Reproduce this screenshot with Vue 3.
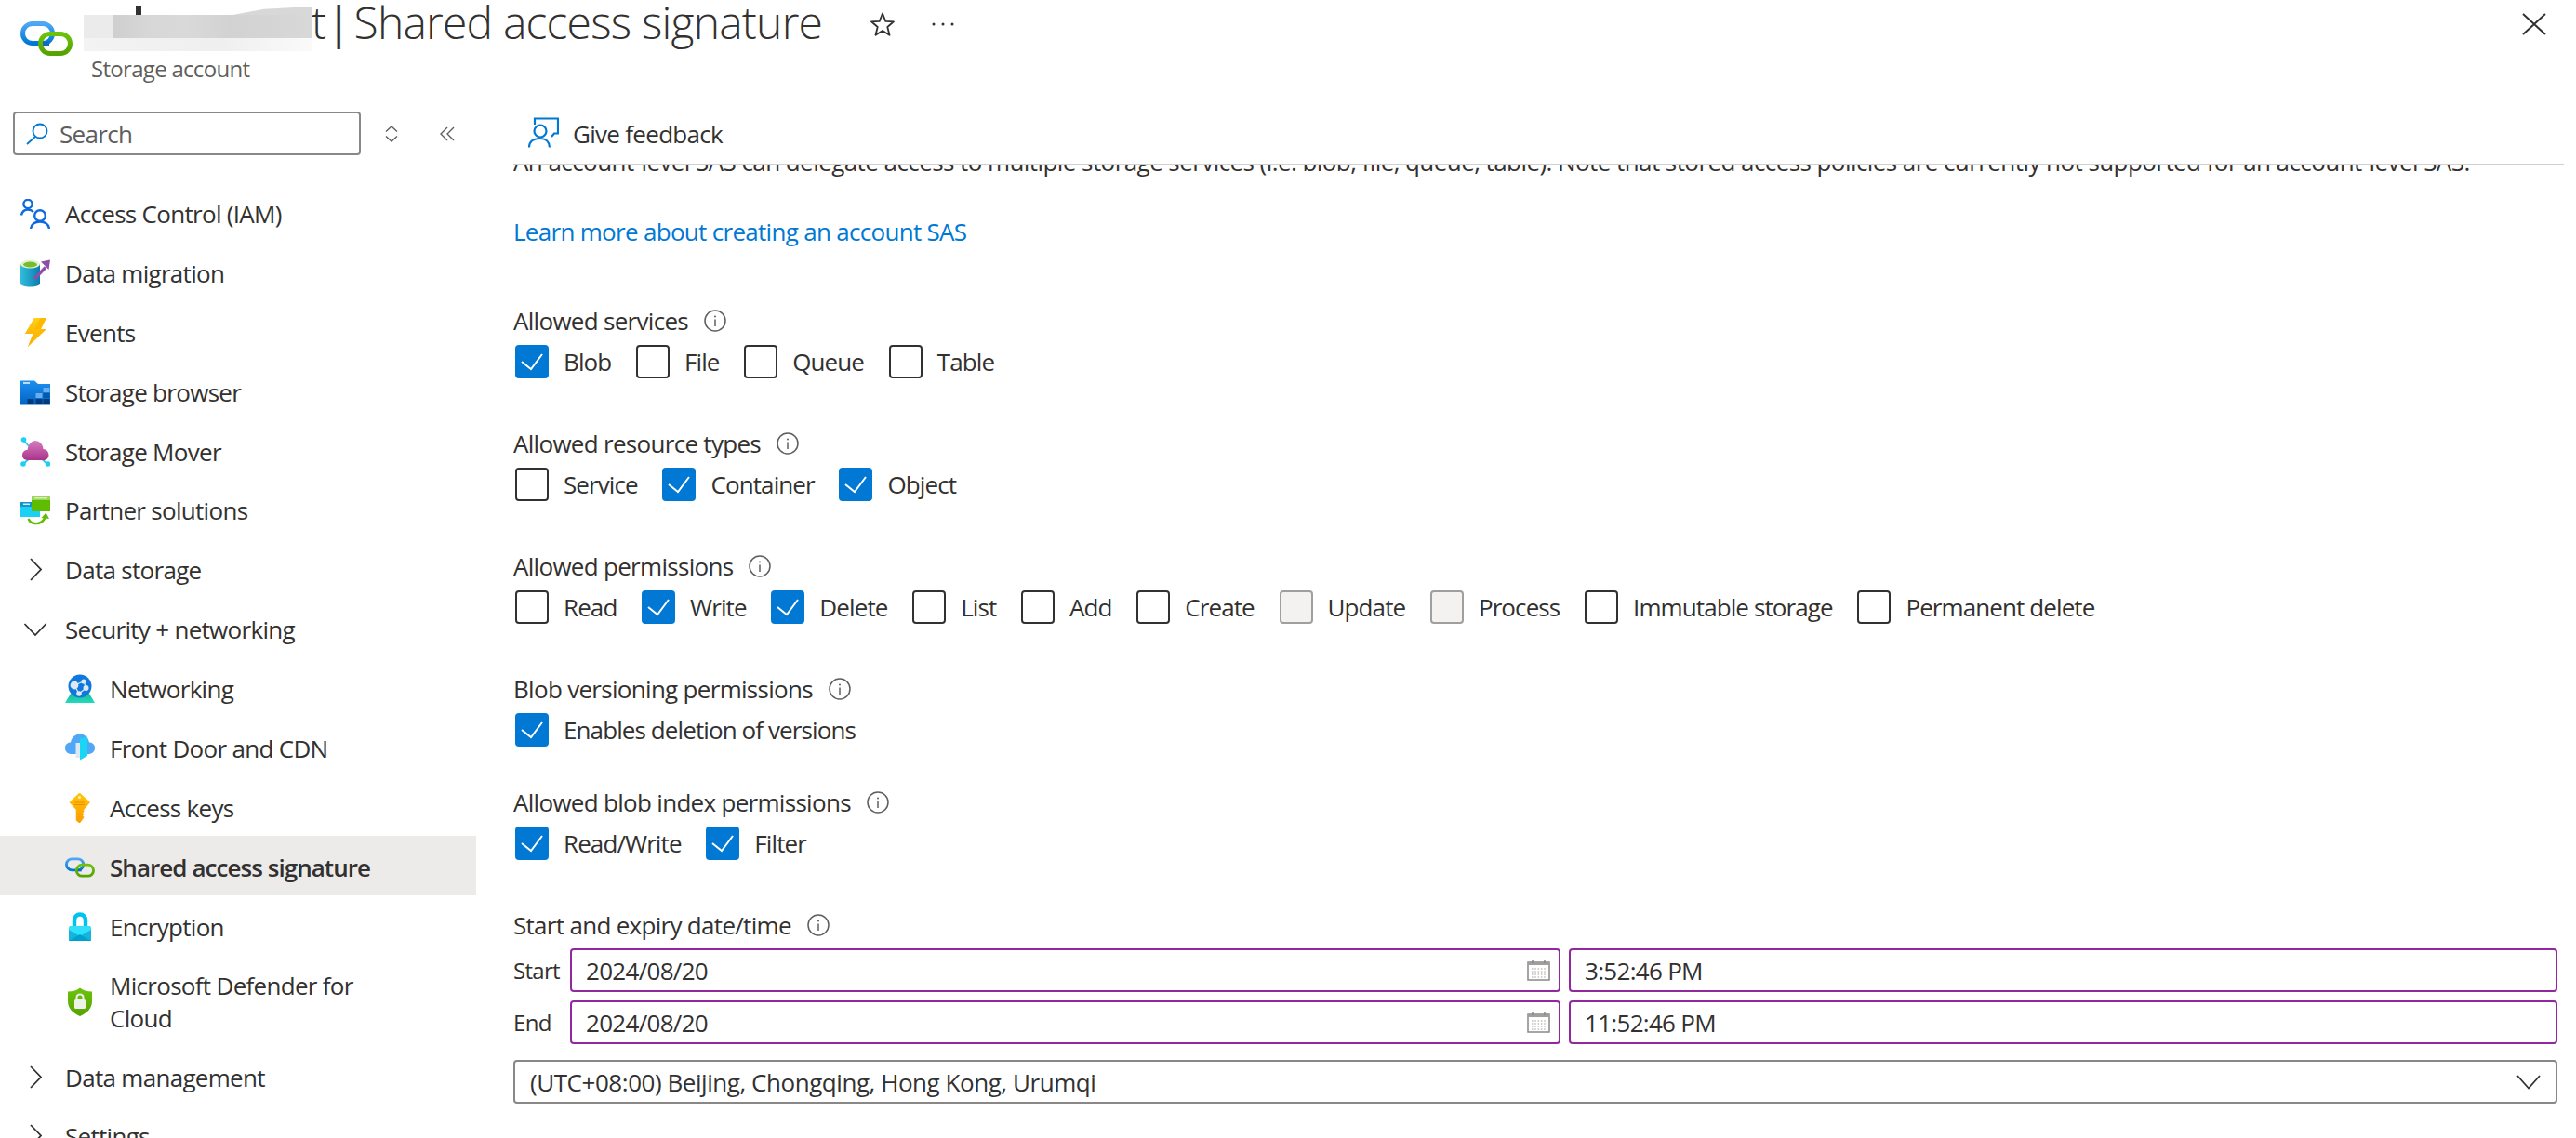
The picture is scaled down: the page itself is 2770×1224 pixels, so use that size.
<script setup>
const navItems = [
  { label: 'Access Control (IAM)', icon: 'iam' },
  { label: 'Data migration', icon: 'migration' },
  { label: 'Events', icon: 'events' },
  { label: 'Storage browser', icon: 'browser' },
  { label: 'Storage Mover', icon: 'mover' },
  { label: 'Partner solutions', icon: 'partner' },
  { label: 'Data storage', icon: 'chev-right' },
  { label: 'Security + networking', icon: 'chev-down' },
  { label: 'Networking', icon: 'networking', child: true },
  { label: 'Front Door and CDN', icon: 'frontdoor', child: true },
  { label: 'Access keys', icon: 'key', child: true },
  { label: 'Shared access signature', icon: 'sas', child: true, active: true },
  { label: 'Encryption', icon: 'encryption', child: true },
  { label: 'Microsoft Defender for Cloud', icon: 'defender', child: true, tall: true },
  { label: 'Data management', icon: 'chev-right' },
  { label: 'Settings', icon: 'chev-right' }
]

const fields = [
  {
    label: 'Allowed services',
    options: [
      { text: 'Blob', on: true },
      { text: 'File' },
      { text: 'Queue' },
      { text: 'Table' }
    ]
  },
  {
    label: 'Allowed resource types',
    options: [
      { text: 'Service' },
      { text: 'Container', on: true },
      { text: 'Object', on: true }
    ]
  },
  {
    label: 'Allowed permissions',
    options: [
      { text: 'Read' },
      { text: 'Write', on: true },
      { text: 'Delete', on: true },
      { text: 'List' },
      { text: 'Add' },
      { text: 'Create' },
      { text: 'Update', disabled: true },
      { text: 'Process', disabled: true },
      { text: 'Immutable storage' },
      { text: 'Permanent delete' }
    ]
  },
  {
    label: 'Blob versioning permissions',
    tight: true,
    options: [{ text: 'Enables deletion of versions', on: true }]
  },
  {
    label: 'Allowed blob index permissions',
    options: [
      { text: 'Read/Write', on: true },
      { text: 'Filter', on: true }
    ]
  }
]

const dateRows = [
  { label: 'Start', date: '2024/08/20', time: '3:52:46 PM' },
  { label: 'End', date: '2024/08/20', time: '11:52:46 PM' }
]
</script>

<template>
  <div class="page">
    <!-- shared icon sprites -->
    <svg class="sprites" width="0" height="0">
      <defs>
        <linearGradient id="g-blue" x1="0" y1="0" x2="0" y2="1"><stop offset="0" stop-color="#50a7f5" /><stop offset="1" stop-color="#0078d4" /></linearGradient>
        <linearGradient id="g-green" x1="0" y1="0" x2="0" y2="1"><stop offset="0" stop-color="#6cc30a" /><stop offset="1" stop-color="#55a300" /></linearGradient>
        <linearGradient id="g-can" x1="0" y1="0" x2="1" y2="0"><stop offset="0" stop-color="#32bedd" /><stop offset="1" stop-color="#0a7cb0" /></linearGradient>
        <linearGradient id="g-folder" x1="0" y1="0" x2="0" y2="1"><stop offset="0" stop-color="#1e90ee" /><stop offset="1" stop-color="#0063c4" /></linearGradient>
        <linearGradient id="g-cloud" x1="0" y1="0" x2="0" y2="1"><stop offset="0" stop-color="#d77cc0" /><stop offset="1" stop-color="#a8338a" /></linearGradient>
        <linearGradient id="g-bolt" x1="0" y1="0" x2="0" y2="1"><stop offset="0" stop-color="#fcd116" /><stop offset="1" stop-color="#ffa400" /></linearGradient>
        <linearGradient id="g-key" x1="0" y1="0" x2="0" y2="1"><stop offset="0" stop-color="#ffc60a" /><stop offset="1" stop-color="#ff9c00" /></linearGradient>
        <linearGradient id="g-base" x1="0" y1="0" x2="0" y2="1"><stop offset="0" stop-color="#1fb890" /><stop offset="1" stop-color="#20dcc0" /></linearGradient>
      </defs>

      <symbol id="ic-sas" viewBox="0 0 56 37">
        <rect x="2.5" y="2.5" width="32" height="21" rx="10.5" fill="none" stroke="url(#g-blue)" stroke-width="5" />
        <rect x="21.5" y="13.5" width="32" height="21" rx="10.5" fill="none" stroke="url(#g-green)" stroke-width="5" />
        <path d="M31 23.8 H24" stroke="#0f6cbd" stroke-width="4.6" fill="none" />
      </symbol>

      <symbol id="ic-iam" viewBox="0 0 32 32">
        <g fill="none" stroke="#0f6ae0" stroke-width="2.4">
          <circle cx="8" cy="5.500" r="4.600" />
          <circle cx="21" cy="18" r="5.800" />
          <path d="M1 17.500 C2 13.500 5 11.500 8 11.500 C10.500 11.500 12.500 12.500 14 14" />
          <path d="M11 32 C12 27 16 24.500 21 24.500 C26 24.500 30 27 31 32" />
        </g>
      </symbol>

      <symbol id="ic-migration" viewBox="0 0 32 32">
        <path d="M0 6 H21 V27 C21 29 16 30.500 10.500 30.500 C5 30.500 0 29 0 27 Z" fill="url(#g-can)" />
        <ellipse cx="10.500" cy="6" rx="10.500" ry="4.500" fill="#e4f3d0" />
        <ellipse cx="10.500" cy="6.500" rx="7.500" ry="3" fill="#76bc2d" />
        <path d="M15 22 L27 9.500" stroke="#8c4fa5" stroke-width="3.400" />
        <path d="M22 3.500 L32 1.500 L30.500 12 Z" fill="#8c4fa5" />
      </symbol>

      <symbol id="ic-events" viewBox="0 0 32 32">
        <path d="M15 0 H28 L22 12 H28 L8 31 L14 17 H5 Z" fill="#ffb900" />
        <path d="M15 0 H21.500 L15 12 H22 L8 31 L13.500 17 H5 Z" fill="url(#g-bolt)" />
      </symbol>

      <symbol id="ic-browser" viewBox="0 0 32 32">
        <path d="M0 3.500 H15 L19 7 H32 V29.500 H0 Z" fill="url(#g-folder)" />
        <rect x="3" y="5" width="7" height="2" fill="#b9dcfb" />
        <rect x="24.500" y="11" width="7" height="5" fill="#66aef0" />
        <rect x="16.500" y="17" width="7" height="5" fill="#66aef0" />
        <rect x="24.500" y="17" width="7" height="5" fill="#0058a8" />
        <rect x="7.500" y="23" width="7" height="5" fill="#003a7a" />
        <rect x="16.500" y="23" width="7" height="5" fill="#003a7a" />
        <rect x="24.500" y="23" width="7" height="5" fill="#003a7a" />
      </symbol>

      <symbol id="ic-mover" viewBox="0 0 32 32">
        <g stroke="#32c4ee" stroke-width="1.800">
          <path d="M3 3 L10 11" />
          <path d="M3 29 L10 23" />
          <path d="M29 29 L22 23" />
        </g>
        <circle cx="3.500" cy="3" r="2.800" fill="#1ad0f5" />
        <circle cx="3" cy="29" r="2.800" fill="#1ad0f5" />
        <circle cx="29.500" cy="29" r="2.800" fill="#1ad0f5" />
        <path d="M8 25 C3.500 25 2 22 2 19.500 C2 16 4.500 14 7.500 14 C8.500 7.500 12 4 16 4 C20.500 4 24 7.500 24.500 13 C28 13 30.500 16 30.500 19.500 C30.500 22.500 28 25 25 25 Z" fill="url(#g-cloud)" />
      </symbol>

      <symbol id="ic-partner" viewBox="0 0 32 32">
        <rect x="0" y="7" width="21" height="16" fill="#1ad0f5" />
        <rect x="0" y="7" width="21" height="5" fill="#1494c8" />
        <rect x="3" y="8.500" width="7" height="1.500" fill="#c8eefc" />
        <rect x="12" y="0" width="20" height="17" fill="#5ebd00" />
        <rect x="12" y="0" width="20" height="5" fill="#9cd45c" />
        <rect x="15" y="2" width="14" height="1.500" fill="#d4eeb8" />
        <path d="M8.500 25 C11 31 21 33 26.500 24" fill="none" stroke="#5ebd00" stroke-width="2.400" />
        <path d="M22.500 24 L27.500 18.500 L31 25 Z" fill="#5ebd00" />
      </symbol>

      <symbol id="ic-networking" viewBox="0 0 32 32">
        <path d="M6 21 H26 L32 31 H0 Z" fill="url(#g-base)" />
        <circle cx="16" cy="13" r="12.500" fill="#0f78dc" />
        <g fill="#dfe9f5">
          <circle cx="10" cy="12" r="4.400" />
          <circle cx="20" cy="8" r="2.600" />
          <circle cx="22.500" cy="15" r="3" />
          <circle cx="15" cy="21" r="2.800" />
        </g>
        <path d="M10 12 L20 8 L22.500 15 L15 21 Z" fill="none" stroke="#dfe9f5" stroke-width="1.200" />
      </symbol>

      <symbol id="ic-frontdoor" viewBox="0 0 32 32">
        <path d="M7 22 C3 22 0 19.500 0 15.500 C0 12 2.500 9.500 6 9.500 C7 4 11 0.500 16 0.500 C21 0.500 25 4 26 9.500 C29.500 9.500 32 12 32 15.500 C32 19.500 29 22 25 22 Z" fill="#50a7f5" />
        <rect x="11.500" y="10" width="4.500" height="16" fill="#dbe9f7" />
        <path d="M16 5.500 L24 3.500 V24 L16 28.500 Z" fill="#1ad6f5" />
      </symbol>

      <symbol id="ic-key" viewBox="0 0 32 32">
        <path d="M15.500 0.500 L26 10 L19.500 17.500 V20 L18 21.500 L19.500 23 L18 24.500 L19.500 26 L15.500 31.500 L12.500 29 V17.500 L5.500 10 Z" fill="url(#g-key)" stroke="url(#g-key)" stroke-linejoin="round" stroke-width="1.500" />
        <circle cx="15.500" cy="4.500" r="1.500" fill="#fff3c4" />
        <path d="M10 10 H21 M10 12.500 H21" stroke="#f08a00" stroke-width="1" />
      </symbol>

      <symbol id="ic-encryption" viewBox="0 0 32 32">
        <path d="M10 15 V9 C10 5 12.500 2.500 16 2.500 C19.500 2.500 22 5 22 9 V15" fill="none" stroke="#00c4f0" stroke-width="4.400" />
        <rect x="4" y="15" width="24" height="16" rx="1.500" fill="#32e0fa" />
        <path d="M4 31 V19 L16 26 L28 19 V31 Z" fill="#14b4dc" />
        <path d="M4 31 L16 24 L28 31 Z" fill="#00a0d0" />
      </symbol>

      <symbol id="ic-defender" viewBox="0 0 32 32">
        <path d="M16 0.500 C20 3.500 24 4.500 29 4.500 V15 C29 23 23 28 16 31 C9 28 3 23 3 15 V4.500 C8 4.500 12 3.500 16 0.500 Z" fill="url(#g-green)" />
        <rect x="10" y="13" width="12" height="10" rx="1.500" fill="#eef3ea" />
        <path d="M12.500 13 V11 C12.500 8.800 14 7.500 16 7.500 C18 7.500 19.500 8.800 19.500 11 V13" fill="none" stroke="#eef3ea" stroke-width="2" />
      </symbol>

      <symbol id="ic-chev-right" viewBox="0 0 32 32">
        <path d="M11 4 L22 15.500 L11 27" fill="none" stroke="#323130" stroke-width="1.800" />
      </symbol>
      <symbol id="ic-chev-down" viewBox="0 0 32 32">
        <path d="M4.500 10 L16 22 L27.500 10" fill="none" stroke="#323130" stroke-width="1.800" />
      </symbol>

      <symbol id="ic-info" viewBox="0 0 24 24">
        <circle cx="12" cy="12" r="11" fill="none" stroke="#605e5c" stroke-width="1.500" />
        <path d="M12 10.500 V18" stroke="#605e5c" stroke-width="1.500" />
        <circle cx="12" cy="7.500" r="1" fill="#605e5c" />
      </symbol>

      <symbol id="ic-calendar" viewBox="0 0 25 22">
        <rect x="1" y="2" width="23" height="19" fill="#fff" stroke="#8a8886" stroke-width="1.500" />
        <rect x="1" y="2" width="23" height="3" fill="#a19f9d" />
        <path d="M6 0 V3 M19 0 V3" stroke="#8a8886" stroke-width="1.500" />
        <path d="M5 9 H20 M5 12 H20 M5 15 H20 M5 18 H20" stroke="#a19f9d" stroke-width="1.200" stroke-dasharray="1.500 1.800" />
      </symbol>
    </svg>

    <header class="header">
      <svg class="logo"><use href="#ic-sas" /></svg>
      <div class="heading">
        <div class="title-row">
          <h1 class="title">
            <span class="name-mask"><i class="mask-tick"></i><i class="mask-step"></i></span><span class="name-tail">t <span class="sep">|</span> </span>Shared access signature
          </h1>
          <svg class="star" viewBox="0 0 26 26">
            <path d="M13 1.500 L16.300 9.800 L25 10.300 L18.300 16 L20.500 24.800 L13 20 L5.500 24.800 L7.700 16 L1 10.300 L9.700 9.800 Z" fill="none" stroke="#323130" stroke-width="1.800" stroke-linejoin="round" />
          </svg>
          <svg class="more" viewBox="0 0 24 4">
            <circle cx="2" cy="2" r="1.500" fill="#323130" />
            <circle cx="12" cy="2" r="1.500" fill="#323130" />
            <circle cx="22" cy="2" r="1.500" fill="#323130" />
          </svg>
        </div>
        <div class="subtitle">Storage account</div>
      </div>
      <svg class="close" viewBox="0 0 26 24">
        <path d="M1 1 L25 23 M25 1 L1 23" stroke="#323130" stroke-width="2" />
      </svg>
    </header>

    <div class="body">
      <aside class="sidebar">
        <div class="search-row">
          <div class="search">
            <svg class="search-icon" viewBox="0 0 24 24">
              <circle cx="15" cy="9" r="7.500" fill="none" stroke="#0078d4" stroke-width="1.800" />
              <path d="M10 15 L1 23" stroke="#0078d4" stroke-width="1.800" />
            </svg>
            <span>Search</span>
          </div>
          <svg class="sort-icon" viewBox="0 0 14 18">
            <path d="M1 6.500 L7 1 L13 6.500 M1 11.500 L7 17 L13 11.500" fill="none" stroke="#605e5c" stroke-width="1.400" />
          </svg>
          <svg class="collapse-icon" viewBox="0 0 16 16">
            <path d="M8 1 L1 8 L8 15 M15 1 L8 8 L15 15" fill="none" stroke="#605e5c" stroke-width="1.400" />
          </svg>
        </div>

        <nav class="nav">
          <div
            v-for="item in navItems"
            :key="item.label"
            class="nav-row"
            :class="{ child: item.child, active: item.active, tall: item.tall }"
          >
            <svg class="nav-icon"><use :href="`#ic-${item.icon}`" /></svg>
            <span class="nav-label">{{ item.label }}</span>
          </div>
        </nav>
      </aside>

      <main class="main">
        <div class="toolbar">
          <svg class="feedback-icon" viewBox="0 0 34 33">
            <g fill="none" stroke="#0078d4" stroke-width="2.200">
              <path d="M8 8 V1.500 H33 V17.500 H29 L26 21" />
              <circle cx="14" cy="15" r="6.500" />
              <path d="M2 32.500 C2 26 7 23 14 23 C20 23 23.500 26 24 32.500" />
            </g>
          </svg>
          <span>Give feedback</span>
        </div>

        <div class="content">
          <p class="intro">An account-level SAS can delegate access to multiple storage services (i.e. blob, file, queue, table). Note that stored access policies are currently not supported for an account-level SAS.</p>
          <a class="learn" href="#">Learn more about creating an account SAS</a>

          <section v-for="field in fields" :key="field.label" class="field" :class="{ tight: field.tight }">
            <div class="field-label">
              <span>{{ field.label }}</span>
              <svg class="info"><use href="#ic-info" /></svg>
            </div>
            <div class="checks">
              <label v-for="opt in field.options" :key="opt.text" class="check">
                <span class="box" :class="{ on: opt.on, disabled: opt.disabled }">
                  <svg v-if="opt.on" viewBox="0 0 36 36">
                    <path d="M7 18 L17 26 L29 10" fill="none" stroke="#fff" stroke-width="2" />
                  </svg>
                </span>
                <span>{{ opt.text }}</span>
              </label>
            </div>
          </section>

          <section class="dates">
            <div class="field-label">
              <span>Start and expiry date/time</span>
              <svg class="info"><use href="#ic-info" /></svg>
            </div>
            <div class="date-grid">
              <template v-for="row in dateRows" :key="row.label">
                <span class="date-label">{{ row.label }}</span>
                <div class="input">
                  <span>{{ row.date }}</span>
                  <svg class="calendar"><use href="#ic-calendar" /></svg>
                </div>
                <div class="input">{{ row.time }}</div>
              </template>
            </div>
            <div class="select">
              <span>(UTC+08:00) Beijing, Chongqing, Hong Kong, Urumqi</span>
              <svg class="select-chev" viewBox="0 0 26 16">
                <path d="M1 1 L13 14.500 L25 1" fill="none" stroke="#323130" stroke-width="1.800" />
              </svg>
            </div>
          </section>
        </div>
      </main>
    </div>
  </div>
</template>

<style>
html, body {
  margin: 0;
  background: #fff;
}
</style>

<style scoped>
.page {
  width: 2770px;
  height: 1224px;
  overflow: hidden;
  display: flex;
  flex-direction: column;
  background: #fff;
  color: #323130;
  font-family: "Open Sans", "Liberation Sans", sans-serif;
  font-size: 26px;
  letter-spacing: -0.7px;
}

.sprites {
  position: absolute;
}

.header {
  height: 112px;
  flex: none;
  display: flex;
  padding-left: 22px;
}

.logo {
  width: 56px;
  height: 37px;
  margin-top: 23px;
  margin-right: 12px;
  flex: none;
}

.title-row {
  display: flex;
  align-items: flex-start;
}

.title {
  margin: -4px 0 0;
  font-size: 48px;
  font-weight: 350;
  line-height: 56px;
  letter-spacing: -0.8px;
  white-space: nowrap;
}

.name-tail {
  word-spacing: -7px;
}

.sep {
  margin: 0 4px 0 -4px;
  font-weight: 500;
}

.name-mask {
  display: inline-block;
  position: relative;
  width: 245px;
  height: 39px;
  vertical-align: -13px;
  background:
    linear-gradient(90deg, #ebebeb 0 32px, #cfcfcf 32px, #d7d7d7 70px, #d9d9d9 110px, #d2d2d2 160px, #d8d8d8 245px) top / 100% 25px no-repeat,
    linear-gradient(90deg, #f3f3f3, #efefef 60%, #fafafa) bottom / 100% 14px no-repeat;
}

.mask-tick {
  position: absolute;
  left: 56px;
  top: -10px;
  width: 6px;
  height: 10px;
  background: #323130;
}

.mask-step {
  position: absolute;
  right: 0;
  top: -9px;
  width: 85px;
  height: 9px;
  background: #d8d8d8;
  clip-path: polygon(0 100%, 40% 30%, 100% 0, 100% 100%);
}

.star {
  width: 26px;
  height: 26px;
  margin: 13px 0 0 52px;
}

.more {
  width: 24px;
  height: 4px;
  margin: 24px 0 0 40px;
}

.subtitle {
  margin: 4px 0 0 8px;
  font-size: 24px;
  line-height: 30px;
  color: #605e5c;
}

.close {
  width: 26px;
  height: 24px;
  margin: 14px 32px 0 auto;
}

.body {
  flex: 1;
  min-height: 0;
  display: flex;
}

.sidebar {
  width: 512px;
  flex: none;
}

.search-row {
  display: flex;
  align-items: center;
  height: 47px;
  margin: 8px 0 0 14px;
}

.search {
  box-sizing: border-box;
  width: 374px;
  height: 47px;
  display: flex;
  align-items: center;
  gap: 12px;
  padding-left: 12px;
  border: 2px solid #8a8886;
  border-radius: 4px;
  color: #605e5c;
}

.search-icon {
  width: 24px;
  height: 24px;
}

.sort-icon {
  width: 14px;
  height: 18px;
  margin-left: 26px;
}

.collapse-icon {
  width: 16px;
  height: 16px;
  margin-left: 45px;
}

.nav {
  margin-top: 29px;
}

.nav-row {
  box-sizing: border-box;
  height: 63.9px;
  padding: 4px 0 0 22px;
  display: flex;
  align-items: center;
  gap: 16px;
}

.nav-row.child {
  padding-left: 70px;
}

.nav-row.active {
  background: #edebe9;
  font-weight: 600;
  letter-spacing: -0.95px;
}

.nav-row.tall {
  height: 98px;
  padding-right: 90px;
  line-height: 35px;
}

.nav-icon {
  width: 32px;
  height: 32px;
  flex: none;
}

.main {
  flex: 1;
  min-width: 0;
  display: flex;
  flex-direction: column;
  padding: 0 20px 0 40px;
}

.toolbar {
  height: 66px;
  flex: none;
  box-sizing: border-box;
  margin-right: -7px;
  display: flex;
  align-items: flex-start;
  gap: 15px;
  padding: 14px 0 0 15px;
  border-bottom: 2px solid #d2d0ce;
  line-height: 36px;
}

.feedback-icon {
  width: 34px;
  height: 33px;
}

.content {
  flex: 1;
  min-height: 0;
  overflow: hidden;
}

.intro {
  margin: -22px 0 0;
  line-height: 36px;
  white-space: nowrap;
  letter-spacing: -0.57px;
}

.learn {
  display: block;
  margin-top: 39px;
  margin-bottom: 60px;
  line-height: 36px;
  color: #0078d4;
  text-decoration: none;
}

.field {
  margin-bottom: 52px;
}

.field.tight {
  margin-bottom: 42px;
}

.field-label {
  height: 36px;
  display: flex;
  align-items: center;
  gap: 17px;
  line-height: 36px;
}

.info {
  width: 24px;
  height: 24px;
}

.checks {
  display: flex;
  gap: 26.7px;
  margin-top: 8px;
  letter-spacing: -0.9px;
}

.check {
  display: flex;
  align-items: center;
  gap: 16px;
  height: 36px;
  margin-left: 2px;
  margin-right: -2px;
}

.box {
  box-sizing: border-box;
  width: 36px;
  height: 36px;
  border: 2px solid #323130;
  border-radius: 4px;
}

.box.on {
  background: #0078d4;
  border-color: #0078d4;
}

.box.on svg {
  display: block;
  width: 36px;
  height: 36px;
  margin: -2px;
}

.box.disabled {
  background: #f3f2f1;
  border-color: #a19f9d;
}

.dates .field-label {
  margin-bottom: 7px;
}

.date-grid {
  display: grid;
  grid-template-columns: 52px 1065px 1063px;
  grid-auto-rows: 47px;
  gap: 9px;
  align-items: center;
}

.input {
  box-sizing: border-box;
  height: 47px;
  display: flex;
  align-items: center;
  justify-content: space-between;
  padding: 0 9px 0 15px;
  border: 2px solid #93279f;
  border-radius: 4px;
}

.date-label {
  font-size: 24px;
}

.calendar {
  width: 25px;
  height: 22px;
}

.select {
  box-sizing: border-box;
  height: 47px;
  margin-top: 17px;
  display: flex;
  align-items: center;
  justify-content: space-between;
  padding: 0 16px;
  border: 2px solid #8a8886;
  border-radius: 4px;
  letter-spacing: -0.45px;
}

.select-chev {
  width: 26px;
  height: 16px;
}
</style>
